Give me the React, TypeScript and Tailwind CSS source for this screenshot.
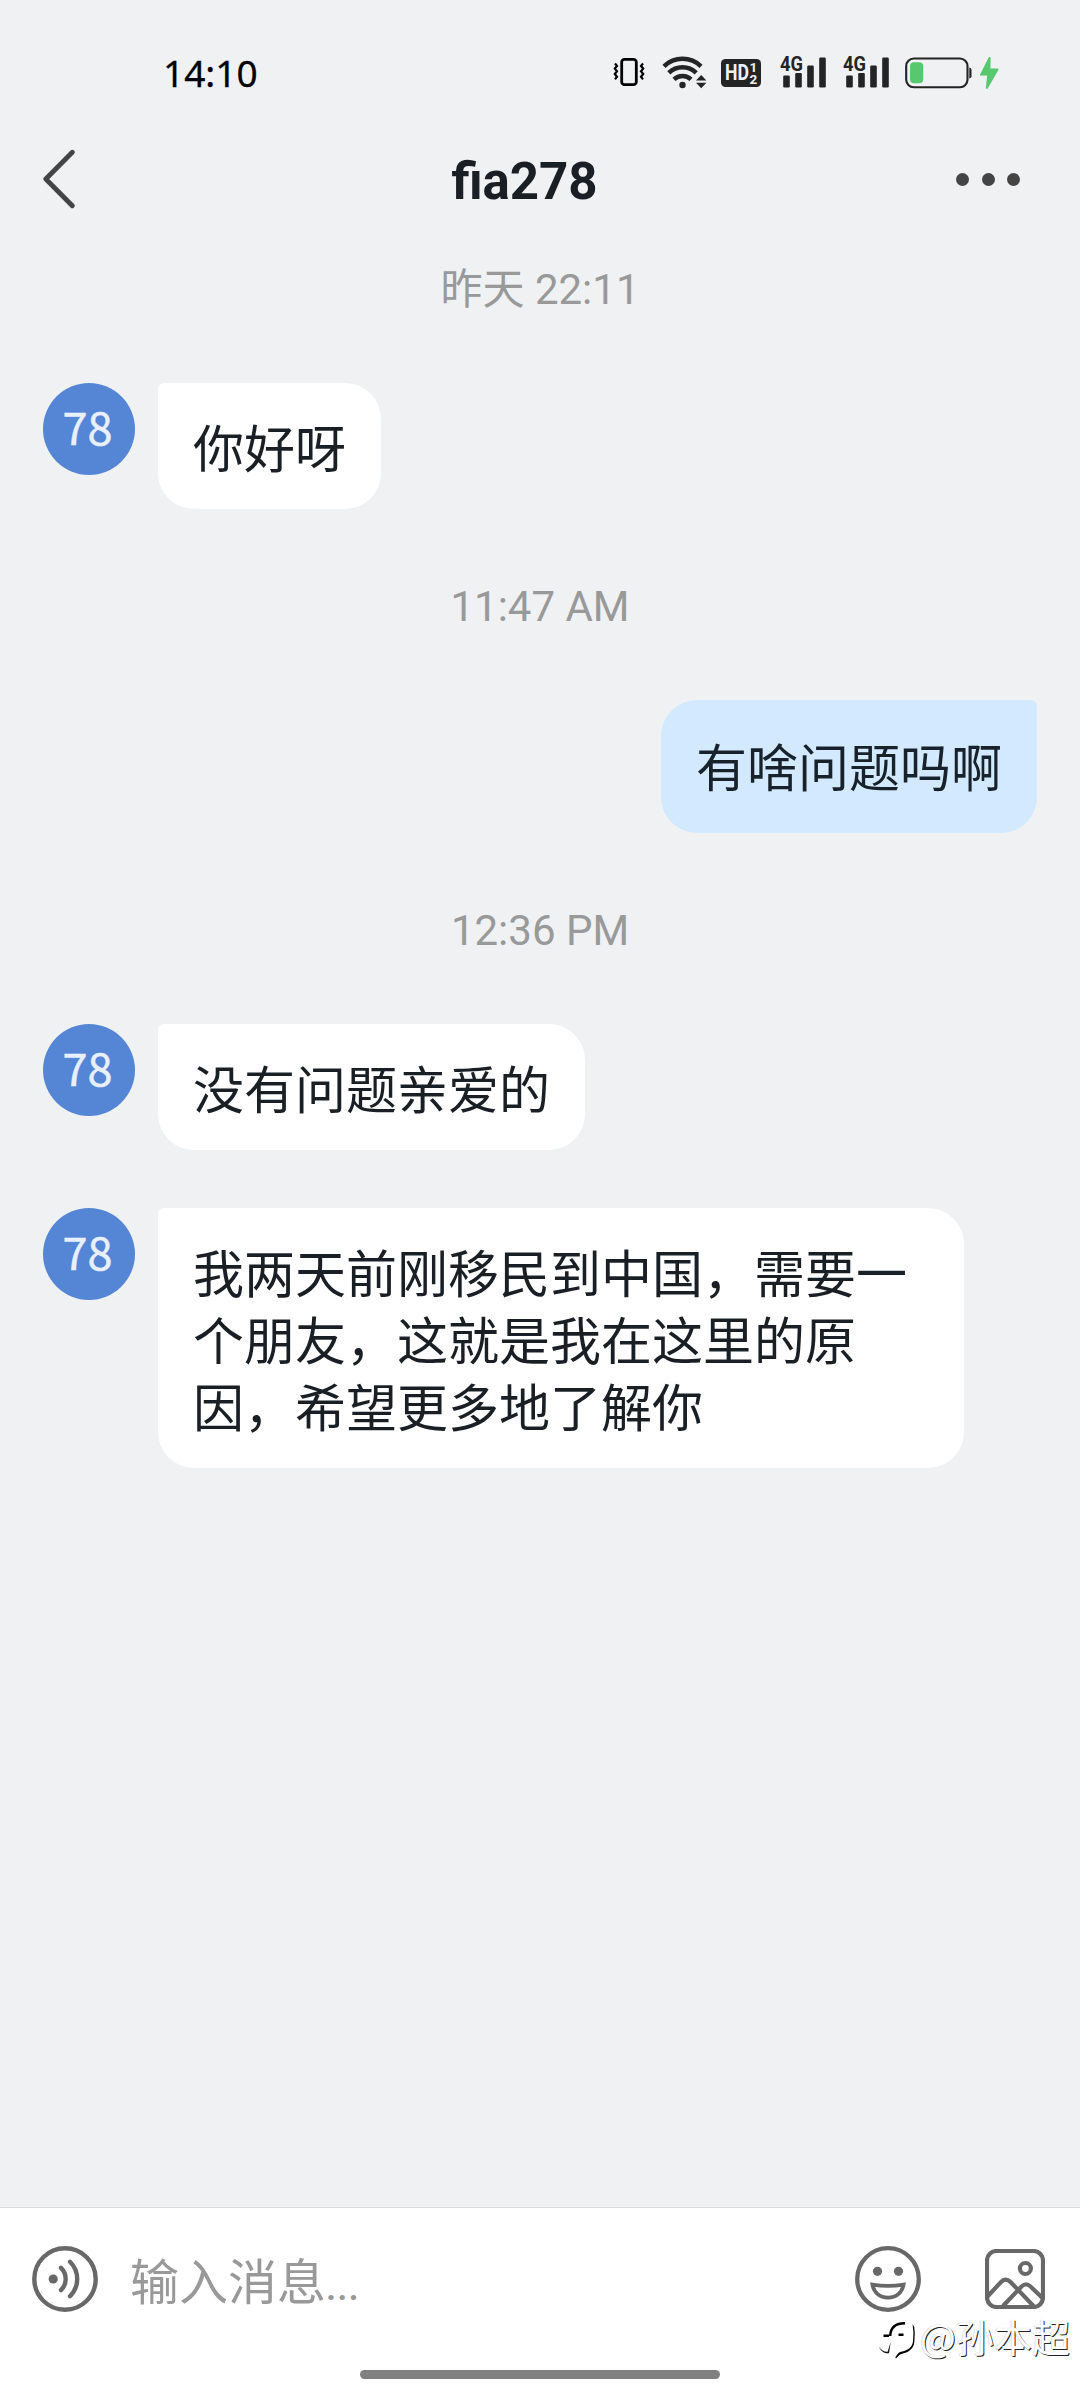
import React from "react";

const CJK = "font-['Noto_Sans_CJK_SC',sans-serif]";

function VibrateIcon() {
  return (
    <svg className="h-[30px] w-[32px]" viewBox="0 0 32 30" fill="none" stroke="#000">
      <rect x="8.7" y="2.3" width="14.6" height="25.4" rx="2.8" strokeWidth="2.8" />
      <path d="M2 6.5l2 2.4-2.2 2.7 2.2 2.7-2.2 2.7 2.2 2.7-2 2.6M30 6.5l-2 2.4 2.2 2.7-2.2 2.7 2.2 2.7-2.2 2.7 2 2.6" strokeWidth="2.2" />
    </svg>
  );
}

function WifiIcon() {
  return (
    <svg className="h-[34px] w-[46px]" viewBox="0 0 46 34" fill="none" stroke="#242424">
      <path d="M2 11.400a26.500 26.500 0 0 1 37 0" strokeWidth="4.500" />
      <path d="M6.800 17.800a19.500 19.500 0 0 1 27.400 0" strokeWidth="4.500" />
      <path d="M12 24.300a12.500 12.500 0 0 1 17 0" strokeWidth="4.500" />
      <circle cx="20.500" cy="30" r="3.200" fill="#242424" stroke="none" />
      <path d="M34 25.500l5.200-5.500 5.200 5.500zM34 27.800l5.200 5.500 5.200-5.500z" fill="#242424" stroke="none" />
    </svg>
  );
}

function HdIcon() {
  return (
    <div className="relative flex h-[28px] w-[40px] items-center rounded-[4.500px] bg-[#242424] font-['Roboto',sans-serif] font-bold text-[#f1f2f4]">
      <span className="ml-[3.500px] w-[25px] origin-left scale-x-[0.820] text-[21.500px] leading-none">HD</span>
      <span className="mt-px flex w-[9px] flex-col text-[13.500px] leading-[11.500px]">
        <span>1</span>
        <span>2</span>
      </span>
    </div>
  );
}

function SignalIcon() {
  return (
    <div className="relative h-[34px] w-[46px]">
      <svg className="h-[34px] w-[46px]" viewBox="0 0 46 34" fill="#242424">
        <rect x="3.200" y="20.500" width="6.600" height="12" rx="1.200" />
        <rect x="15.200" y="18" width="6.600" height="14.500" rx="1.200" />
        <rect x="27.200" y="10.500" width="6.600" height="22" rx="1.200" />
        <rect x="39.200" y="2.500" width="6.600" height="30" rx="1.200" />
      </svg>
      <span className="absolute top-[-3.500px] left-0 origin-left scale-x-[0.870] font-['Roboto',sans-serif] text-[21px] leading-[24px] font-bold text-[#242424]">4G</span>
    </div>
  );
}

function BatteryIcon() {
  return (
    <svg className="h-[32px] w-[96px]" viewBox="0 0 96 32" fill="none">
      <rect x="1.200" y="1.500" width="61.300" height="28.800" rx="7.500" stroke="#242424" strokeWidth="2.100" />
      <rect x="5" y="5.300" width="13.200" height="20.900" rx="4" fill="#58c86e" />
      <path d="M64.300 10.400q2.200 .4 2.200 2.400v6.400q0 2-2.200 2.400z" fill="#242424" />
      <path d="M83.800 .3L74.600 18.500h7.600L80.800 31.200q1 1 2 0L93.500 12.800q.4-1.300-1-1.300h-7l.1-11q-1-1-1.800-.2z" fill="#58c86e" />
    </svg>
  );
}

function StatusBar() {
  return (
    <div className="flex h-[144px] items-center pl-[163px]">
      <div className="w-[450px] font-['Noto_Sans',sans-serif] text-[37px] leading-none text-black [-webkit-text-stroke:0.300px_black]">14:10</div>
      <div className="flex items-center">
        <VibrateIcon />
        <div className="ml-[16.500px]"><WifiIcon /></div>
        <div className="mt-[2px] ml-[13.500px]"><HdIcon /></div>
        <div className="ml-[19px]"><SignalIcon /></div>
        <div className="ml-[17px]"><SignalIcon /></div>
        <div className="mt-[2px] ml-[16px]"><BatteryIcon /></div>
      </div>
    </div>
  );
}

function Header() {
  return (
    <div className="flex h-[70px] items-center justify-between pr-[60px] pl-[43px]">
      <svg className="h-[60px] w-[34px]" viewBox="0 0 34 60" fill="none" stroke="#444" strokeWidth="4.800" strokeLinecap="round" strokeLinejoin="round">
        <path d="M29.300 3.200L2.800 30l26.500 26.800" />
      </svg>
      <div className="mt-[6px] ml-[16px] font-['Roboto',sans-serif] text-[51px] leading-[60px] font-bold text-[#1a1f25]">fia278</div>
      <div className="flex gap-[12.500px]">
        <div className="size-[13px] rounded-full bg-[#444]" />
        <div className="size-[13px] rounded-full bg-[#444]" />
        <div className="size-[13px] rounded-full bg-[#444]" />
      </div>
    </div>
  );
}

function TimeLabel({ children }: { children: React.ReactNode }) {
  return (
    <div className="flex h-[50px] items-center justify-center pt-[2px] font-['Roboto','Noto_Sans_CJK_SC',sans-serif] text-[42px] leading-[50px] text-[#999]">
      <span>{children}</span>
    </div>
  );
}

function Incoming({ lines, wide }: { lines: string[]; wide?: boolean }) {
  return (
    <div className="flex items-start gap-[23px] pl-[43px]">
      <div className={`${CJK} flex size-[92px] items-center justify-center rounded-full bg-[#5586d5] pr-[3px] pb-[6px] text-[45px] leading-[60px] text-[#e9f0fd] [-webkit-text-stroke:0.500px_#e9f0fd]`}>78</div>
      <div className={`${CJK} ${wide ? "w-[806px]" : ""} rounded-[36px] rounded-tl-[6px] bg-white px-[35px] pt-[30px] pb-[29px] text-[51px] leading-[67px] text-[#1a1f25]`}>
        {lines.map((line) => (
          <div key={line} className="whitespace-nowrap">{line}</div>
        ))}
      </div>
    </div>
  );
}

function Outgoing({ text }: { text: string }) {
  return (
    <div className="flex justify-end pr-[43px]">
      <div className={`${CJK} rounded-[36px] rounded-tr-[6px] bg-[#d2e9ff] px-[35px] pt-[32px] pb-[34px] text-[51px] leading-[67px] text-[#17222b]`}>{text}</div>
    </div>
  );
}

function VoiceIcon() {
  return (
    <svg className="size-[66px]" viewBox="0 0 66 66" fill="none" stroke="#686868" strokeWidth="4.400" strokeLinecap="round">
      <circle cx="33" cy="33" r="30.700" />
      <circle cx="21.200" cy="33" r="4.600" fill="#686868" stroke="none" />
      <path d="M29 21.900q4.700 4.700 4.700 11.100t-4.700 11.100M38 15.800q7.200 7.200 7.200 17.200t-7.200 17.200" />
    </svg>
  );
}

function SmileIcon() {
  return (
    <svg className="size-[66px]" viewBox="0 0 66 66" fill="none" stroke="#686868" strokeWidth="4.300">
      <circle cx="33" cy="33" r="30.800" />
      <circle cx="22.500" cy="25.300" r="4.600" fill="#686868" stroke="none" />
      <circle cx="43.500" cy="25.300" r="4.600" fill="#686868" stroke="none" />
      <path d="M17.500 38.600q15.500 2.400 31 0c-1.300 8-7.300 13-15.500 13s-14.200-5-15.500-13z" strokeWidth="3.800" />
    </svg>
  );
}

function PhotoIcon() {
  return (
    <svg className="size-[60px]" viewBox="0 0 60 60" fill="none" stroke="#686868" strokeWidth="4.200">
      <rect x="2" y="2" width="56" height="56" rx="9.500" />
      <circle cx="40.400" cy="19.500" r="5.500" />
      <path d="M2.500 47.500L15.800 33.200q4.700-5 9.700-.2L48.500 57M18 57L36.500 37.500q4.500-4.300 9 0L57.500 49" />
    </svg>
  );
}

function Watermark() {
  return (
    <div className="absolute top-[103px] right-[10px] flex items-center text-white">
      <svg className="mt-[9px] h-[40px] w-[38px] overflow-visible" viewBox="0 0 38 40" fill="none">
        <path d="M6.500 15.800h5.500M21.500 14.800h5M13.200 16C13.500 8 18 3.200 28 3.300" stroke="#000" strokeWidth="2.400" />
        <path d="M35.600 4l1.600 3 .6 6-.5 9c-.5 6-5 10.300-12.300 11.800-3 .9-4 2.700-6 4.700l-.7-1.300c2-2.300 2.700-4.700 5.700-5.400 6.500-1.300 11.300-4.300 12-10.300q1-9-.4-17.500z" fill="#000" />
        <path d="M13.700 22l-1.700 11.300c-4 .5-8-2-10-6.300 2.500 3.500 5.500 5 8.600 4.700z" fill="#111" />
      </svg>
      <span className={`${CJK} ml-[5px] text-[38px] leading-[46px] [text-shadow:1px_1px_0.500px_#222,-0.500px_-0.500px_1px_#ccc]`}>@孙本超</span>
    </div>
  );
}

export default function App() {
  return (
    <div className="flex h-[2400px] w-[1080px] flex-col overflow-hidden bg-[#eff1f3]">
      <StatusBar />
      <Header />
      <main className="flex flex-1 flex-col pt-[50px]">
        <TimeLabel>昨天 22:11</TimeLabel>
        <div className="mt-[69px]"><Incoming lines={["你好呀"]} /></div>
        <div className="mt-[72px]"><TimeLabel>11:47 AM</TimeLabel></div>
        <div className="mt-[69px]"><Outgoing text="有啥问题吗啊" /></div>
        <div className="mt-[72px]"><TimeLabel>12:36 PM</TimeLabel></div>
        <div className="mt-[69px]"><Incoming lines={["没有问题亲爱的"]} /></div>
        <div className="mt-[58px]">
          <Incoming wide lines={["我两天前刚移民到中国，需要一", "个朋友，这就是我在这里的原", "因，希望更多地了解你"]} />
        </div>
      </main>
      <footer className="relative flex h-[193px] flex-col border-t border-[#dcdcdc] bg-white">
        <div className="flex h-[142px] items-center pr-[35px] pl-[32px]">
          <VoiceIcon />
          <div className={`${CJK} mt-[4px] ml-[32px] flex-1 text-[49px] leading-[60px] text-[#999]`}>
            输入消息<span className="-ml-[1px] font-['Roboto',sans-serif] text-[47px] tracking-[-1.200px]">...</span>
          </div>
          <SmileIcon />
          <div className="ml-[64px]"><PhotoIcon /></div>
        </div>
        <div className="mx-auto mt-[20px] h-[9px] w-[360px] rounded-full bg-[#808080]" />
        <Watermark />
      </footer>
    </div>
  );
}
